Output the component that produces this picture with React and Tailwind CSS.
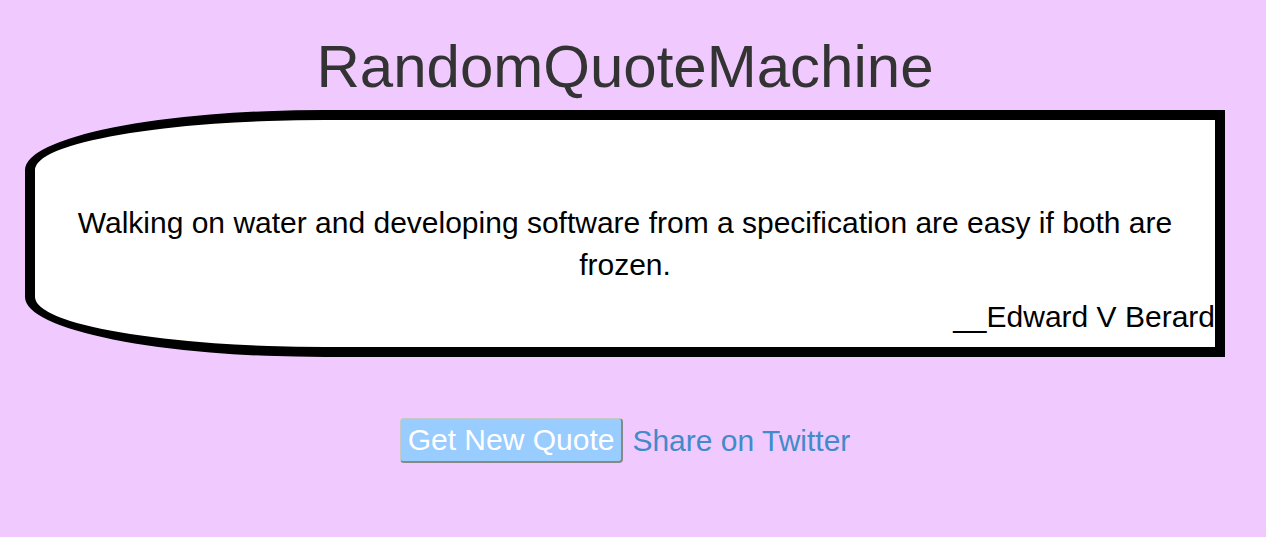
// Random quote machine — single card with the current quote plus two actions
const quote = {
  text: 'Walking on water and developing software from a specification are easy if both are frozen.',
  author: 'Edward V Berard',
};

const App = () => {
  return (
    <div className="min-h-[537px] bg-[#f0caff] font-['Liberation_Sans',Arial,sans-serif] text-[#333]">
      <div className="w-[1250px] flex flex-col items-center pt-[32px]">
        <h1 className="text-[60px] leading-[69px] font-normal">RandomQuoteMachine</h1>

        <div className="mt-[9px] w-[1200px] h-[247px] bg-white border-[10px] border-black rounded-[300px_0_0_300px/60px_0_0_60px] text-black">
          <p className="pt-[82px] px-[30px] text-center text-[30px] leading-[42px]">
            {quote.text}
          </p>
          <p className="mt-[10px] text-right text-[30px] leading-[42px]">__{quote.author}</p>
        </div>

        <div className="mt-[61px] flex items-center gap-[9px]">
          <button className="h-[45px] px-[7px] bg-[#99ccff] text-white text-[30px] leading-[34px] rounded-[4px] border border-t-[#c8c8c8] border-l-[#c8c8c8] border-r-2 border-b-2 border-r-[#888] border-b-[#888]">
            Get New Quote
          </button>
          <a href="#" className="text-[#428bca] text-[30px] leading-[34px]">Share on Twitter</a>
        </div>
      </div>
    </div>
  );
};

export default App;
